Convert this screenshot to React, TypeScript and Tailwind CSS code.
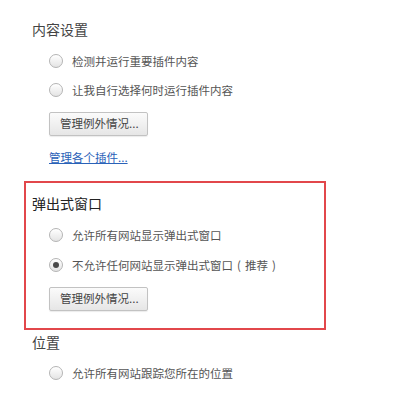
import React from "react";

const font = { fontFamily: '"Noto Sans CJK SC", "Noto Sans", sans-serif' };

function Radio({ label, checked }: { label: React.ReactNode; checked?: boolean }) {
  return (
    <div className="flex h-[20px] items-center pl-[25px]">
      <span className="flex h-[14px] w-[14px] items-center justify-center rounded-full border border-[#b4b4b4] bg-gradient-to-b from-[#ffffff] to-[#e4e4e4] shadow-[inset_0_1px_1px_rgba(255,255,255,0.9)]">
        {checked && <span className="h-[6px] w-[6px] rounded-full bg-[#4a4a4a]" />}
      </span>
      <span className="ml-[9px] text-[11.5px] leading-[20px] text-[#555555]">{label}</span>
    </div>
  );
}

function Btn() {
  return (
    <div className="pl-[25px]">
      <div className="flex h-[24px] w-[99px] items-center rounded-[2px] border border-[#c2c2c2] bg-gradient-to-b from-[#fbfbfb] to-[#e6e6e6] pl-[10px] text-[11.5px] text-[#444444] shadow-[0_1px_1px_rgba(0,0,0,0.08)]">
        管理例外情况...
      </div>
    </div>
  );
}

export default function App() {
  return (
    <div className="h-[414px] w-[420px] overflow-hidden bg-white px-[24px]" style={font}>
      <div className="h-[19px]" />
      <div className="h-[20px] pl-[8px] text-[14px] leading-[20px] text-[#444444]">内容设置</div>
      <div className="mt-[12px]">
        <Radio label="检测并运行重要插件内容" />
      </div>
      <div className="mt-[9px]">
        <Radio label="让我自行选择何时运行插件内容" />
      </div>
      <div className="mt-[12px]">
        <Btn />
      </div>
      <div className="mt-[13px] h-[16px] pl-[25px] text-[11.5px] leading-[16px] text-[#2a62b8] underline">管理各个插件...</div>
      <div className="mt-[16px] w-[302px] border-[2px] border-[#e2474b] pb-[17px] pl-[6px] pt-[10px]">
        <div className="h-[20px] text-[14px] leading-[20px] text-[#222222]">弹出式窗口</div>
        <div className="mt-[12px] -ml-[8px]">
          <Radio label="允许所有网站显示弹出式窗口" />
        </div>
        <div className="mt-[10px] -ml-[8px]">
          <Radio
            checked
            label={
              <>
                不允许任何网站显示弹出式窗口
                <span className="inline-block w-[12px] text-center">(</span>
                推荐
                <span className="inline-block w-[12px] text-center">)</span>
              </>
            }
          />
        </div>
        <div className="mt-[12px] -ml-[8px]">
          <Btn />
        </div>
      </div>
      <div className="mt-[2px] h-[20px] pl-[8px] text-[14px] leading-[20px] text-[#444444]">位置</div>
      <div className="mt-[11px]">
        <Radio label="允许所有网站跟踪您所在的位置" />
      </div>
    </div>
  );
}
